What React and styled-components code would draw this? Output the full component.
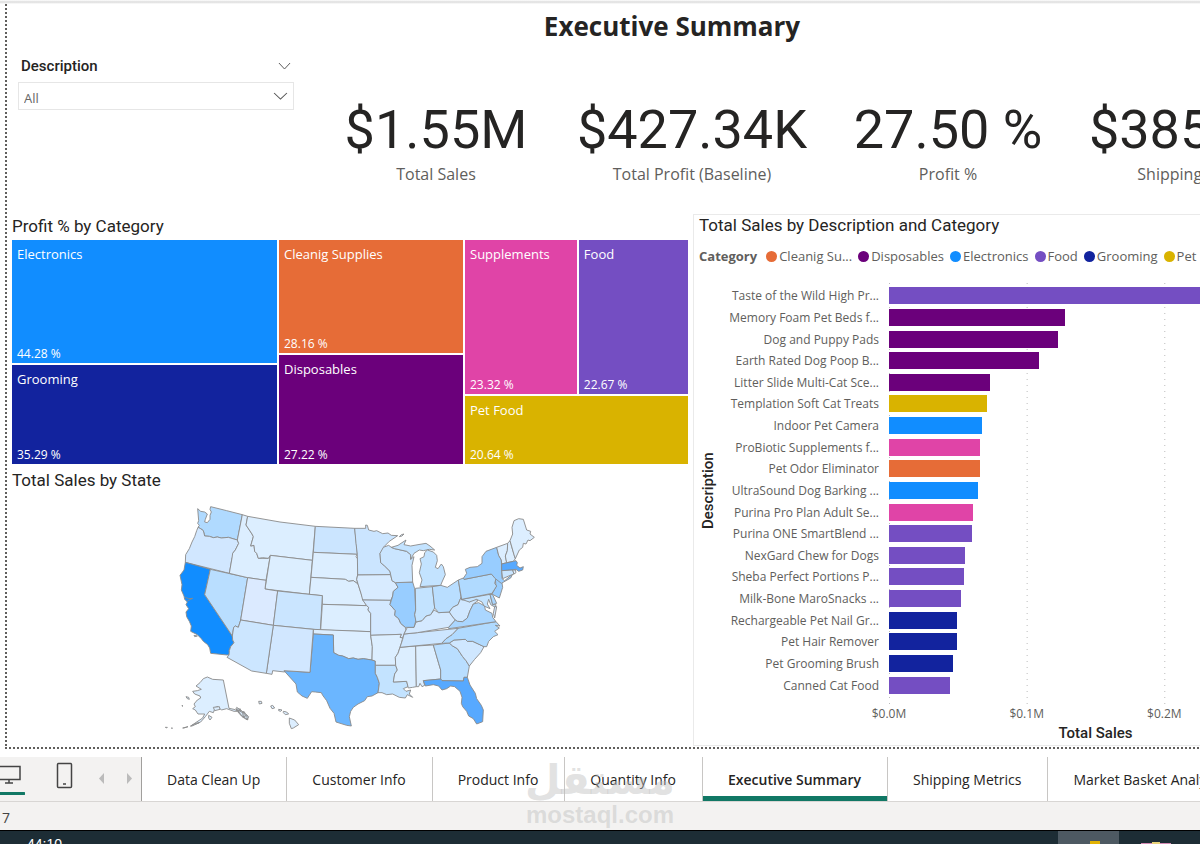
import React from 'react'
import styled, { createGlobalStyle } from 'styled-components'

const GlobalStyle = createGlobalStyle`
    * {
        box-sizing: border-box;
    }
    body {
        margin: 0;
        background: #fff;
        color: #252423;
        font-family: "Open Sans", "Noto Sans", sans-serif;
        overflow: hidden;
    }
    button, select {
        font-family: inherit;
    }
`;

const din = '"Roboto", "Liberation Sans", sans-serif';

const Page = styled.div`
    position: relative;
    overflow: hidden;
`;
const Ribbon = styled.div`
    height: 4px;
    background: linear-gradient(#fff, #dcdcdc, #fff);
`;
const Report = styled.main`
    width: 111%;
    padding: 0 0 3px 12px;
    background:
        repeating-linear-gradient(#605e5c 0 2px, transparent 2px 4px) 5px 0 / 2px 100% no-repeat,
        repeating-linear-gradient(90deg, #605e5c 0 2px, transparent 2px 4px) 5px 100% / 100% 2px no-repeat;
`;
const Title = styled.h1`
    margin: 0;
    height: 46px;
    line-height: 45px;
    font-size: 26px;
    font-weight: 700;
    text-align: center;
`;
const Summary = styled.section`
    display: flex;
    height: 164px;
`;
const Slicer = styled.div`
    width: 276px;
    margin: 0 14px 0 6px;
`;
const SlicerHeader = styled.div`
    display: flex;
    align-items: center;
    justify-content: space-between;
    height: 32px;
    padding: 0 3px;
    font-family: ${din};
    font-size: 15px;
    font-weight: 500;
`;
const IconButton = styled.button`
    display: flex;
    padding: 0;
    border: none;
    background: none;
    cursor: pointer;
`;
const SelectBox = styled.div`
    position: relative;
    display: flex;
    align-items: center;
    height: 28px;
    border: 1px solid #e6e6e6;

    svg {
        position: absolute;
        right: 5px;
        pointer-events: none;
    }
`;
const Select = styled.select`
    width: 100%;
    height: 26px;
    padding: 4px 5px 0;
    border: none;
    background: none;
    color: #666;
    font-size: 13px;
    appearance: none;
`;
const Cards = styled.div`
    display: flex;
    flex: 1;
`;
const Card = styled.div`
    display: flex;
    flex: 1 1 0;
    flex-direction: column;
    align-items: center;
    padding-top: 48px;
    white-space: nowrap;
`;
const CardValue = styled.div`
    font-family: ${din};
    font-size: 54px;
    line-height: 64px;
`;
const CardLabel = styled.div`
    color: #605e5c;
    font-size: 16px;
    line-height: 24px;
`;
const Visuals = styled.div`
    display: grid;
    grid-template-columns: 676fr 639fr;
    column-gap: 5px;
`;
const VisualTitle = styled.h2`
    margin: 0;
    height: ${props => props.$height}px;
    line-height: ${props => props.$height - 2}px;
    font-family: ${din};
    font-size: 17px;
    font-weight: 400;
`;
const Treemap = styled.div`
    display: flex;
    gap: 2px;
    height: 224px;
`;
const TreeColumn = styled.div`
    display: flex;
    flex: ${props => props.$size} 1 0;
    flex-direction: column;
    gap: 2px;
`;
const TreeRow = styled.div`
    display: flex;
    flex: ${props => props.$size} 1 0;
    gap: 2px;
`;
const Tile = styled.div`
    display: flex;
    flex: ${props => props.$size} 1 0;
    flex-direction: column;
    justify-content: space-between;
    padding: 5px 5px 0;
    background: ${props => props.$color};
    color: #fff;
    font-size: 13px;
    line-height: 18px;
`;
const TileValue = styled.span`
    font-size: 12px;
`;
const MapDrawing = styled.svg`
    display: block;
    width: 100%;
    height: 242px;
    stroke: #8a8a8a;
    stroke-width: 2.7;
    stroke-linejoin: round;
`;
const BarVisual = styled.section`
    height: 532px;
    padding-left: 5px;
    border: 1px solid #eaeaea;
`;
const Legend = styled.ul`
    display: flex;
    align-items: center;
    gap: 6px;
    height: 36px;
    margin: 0;
    padding: 0;
    list-style: none;
    color: #605e5c;
    font-size: 13px;
    white-space: nowrap;
`;
const LegendTitle = styled.li`
    margin-right: 3px;
    font-weight: 700;
`;
const LegendItem = styled.li`
    display: flex;
    align-items: center;
    gap: 2px;
`;
const Dot = styled.span`
    width: 11px;
    height: 11px;
    border-radius: 50%;
    background: ${props => props.$color};
`;
const ChartBody = styled.div`
    display: grid;
    grid-template-columns: 18px 162px 1fr;
    column-gap: 5px;
    padding: 8px 29px 0 0;
`;
const AxisTitle = styled.div`
    font-family: ${din};
    font-size: 15px;
    font-weight: 500;
    line-height: 18px;
    text-align: center;
`;
const VerticalTitle = styled(AxisTitle)`
    padding-top: 6px;
    writing-mode: vertical-rl;
    transform: rotate(180deg);
`;
const Names = styled.div`
    display: flex;
    flex-direction: column;
    height: 411px;
    margin-top: 3px;
    padding-right: 5px;
    color: #605e5c;
    font-size: 12px;
    text-align: right;
    white-space: nowrap;
`;
const Name = styled.div`
    display: flex;
    flex: 1;
    align-items: center;
    justify-content: flex-end;
`;
const Plot = styled.div`
    height: 423px;
    padding: 3px 0 9px;
    display: flex;
    flex-direction: column;
    background: repeating-linear-gradient(#fff 0 1px, transparent 1px 2px, #fff 2px 6px),
        linear-gradient(90deg, #bbb 1px, transparent 1px) 0 0 / 33.33% 100%;
`;
const BarSlot = styled.div`
    display: flex;
    flex: 1;
    align-items: center;
`;
const Bar = styled.div`
    height: 17px;
    background: ${props => props.$color};
`;
const Ticks = styled.div`
    display: grid;
    grid-column: 3;
    grid-template-columns: repeat(3, 1fr);
    color: #605e5c;
    font-size: 12px;
    line-height: 18px;
`;
const Tick = styled.span`
    width: 60px;
    margin-left: -30px;
    text-align: center;
`;
const BottomTitle = styled(AxisTitle)`
    grid-column: 3;
    line-height: 20px;
`;
const TabBar = styled.nav`
    display: flex;
    height: 45px;
    margin-top: 8px;
    border-bottom: 1px solid #d8d6d4;
`;
const ViewTools = styled.div`
    display: flex;
    flex: 0 0 142px;
    align-items: center;
    border-right: 1px solid #a19f9d;
    background: #f3f2f1;
`;
const ViewButton = styled(IconButton)`
    width: ${props => props.$width}px;
    height: 44px;
    align-items: flex-start;
    justify-content: ${props => props.$end ? 'flex-end' : 'flex-start'};
`;
const Tab = styled.button`
    flex: none;
    height: 44px;
    padding: 0 26px 0 25px;
    border: none;
    border-right: 1px solid #c8c6c4;
    background: #fff;
    color: #252423;
    font-size: 14px;
    font-weight: ${props => props.$active ? 600 : 400};
    box-shadow: ${props => props.$active ? 'inset 0 -5px #117865' : 'none'};
    cursor: pointer;
`;
const StatusBar = styled.div`
    height: 28px;
    padding: 0 2px;
    background: #f3f2f1;
    color: #444;
    font-size: 14px;
    line-height: 32px;
`;
const Taskbar = styled.footer`
    display: flex;
    height: 14px;
    overflow: hidden;
    border-top: 1px solid #000;
    background: #1d2d35;
    color: #fff;
`;
const Clock = styled.span`
    flex: 0 0 1058px;
    padding: 5px 27px 0;
    font-family: "Liberation Sans", sans-serif;
    font-size: 14px;
    line-height: 16px;
`;
const TaskItem = styled.div`
    display: flex;
    flex: 0 0 61px;
    align-items: flex-end;
    justify-content: center;
    padding-left: 12px;
    background: ${props => props.$active ? '#4d5962' : 'transparent'};
`;
const Watermark = styled.div`
    position: absolute;
    bottom: 16px;
    left: 50%;
    width: 160px;
    margin-left: -80px;
    color: rgba(190, 190, 190, 0.45);
    font-family: "Liberation Sans", sans-serif;
    font-size: 24px;
    font-weight: 700;
    line-height: 26px;
    text-align: center;
    pointer-events: none;
`;
const WatermarkName = styled.div`
    font-family: "DejaVu Sans", sans-serif;
    font-size: 41px;
    line-height: 44px;
`;

const colors = {
  cleaning: '#e66c37',
  disposables: '#6b007b',
  electronics: '#118dff',
  food: '#744ec2',
  grooming: '#12239e',
  petFood: '#d9b300',
  supplements: '#e044a7',
};

const cards = [
  ['$1.55M', 'Total Sales'],
  ['$427.34K', 'Total Profit (Baseline)'],
  ['27.50 %', 'Profit %'],
  ['$385.80K', 'Shipping Revenue'],
];

const legend = [
  ['Cleanig Su...', colors.cleaning],
  ['Disposables', colors.disposables],
  ['Electronics', colors.electronics],
  ['Food', colors.food],
  ['Grooming', colors.grooming],
  ['Pet Food', colors.petFood],
];

// sales in thousands of dollars, the axis ends at 300
const products = [
  ['Taste of the Wild High Pr...', 276, colors.food],
  ['Memory Foam Pet Beds f...', 127.5, colors.disposables],
  ['Dog and Puppy Pads', 122.8, colors.disposables],
  ['Earth Rated Dog Poop B...', 109.2, colors.disposables],
  ['Litter Slide Multi-Cat Sce...', 73.4, colors.disposables],
  ['Templation Soft Cat Treats', 71.4, colors.petFood],
  ['Indoor Pet Camera', 67.8, colors.electronics],
  ['ProBiotic Supplements f...', 66.2, colors.supplements],
  ['Pet Odor Eliminator', 65.8, colors.cleaning],
  ['UltraSound Dog Barking ...', 64.8, colors.electronics],
  ['Purina Pro Plan Adult Se...', 60.7, colors.supplements],
  ['Purina ONE SmartBlend ...', 60.1, colors.food],
  ['NexGard Chew for Dogs', 55.2, colors.food],
  ['Sheba Perfect Portions P...', 54.5, colors.food],
  ['Milk-Bone MaroSnacks ...', 52.3, colors.food],
  ['Rechargeable Pet Nail Gr...', 49.7, colors.grooming],
  ['Pet Hair Remover', 49.6, colors.grooming],
  ['Pet Grooming Brush', 46.4, colors.grooming],
  ['Canned Cat Food', 44.2, colors.food],
];

const states = [
  ['WA', '#b0daff', '113,56 122,64 134,66 142,72 136,88 134,96 142,98 150,88 150,76 154,66 150,58 152,50 200,62 247,74 232,150 205,142 184,144 172,141 160,143 148,139 134,138 130,122 122,116 114,112 118,106 113,100 116,92'],
  ['OR', '#d1e7ff', '114,112 122,116 130,122 134,138 148,139 160,143 172,141 184,144 205,142 232,150 236,160 226,180 218,190 220,198 216,204 208,250 76,217 77,194 88,176 96,156 104,140 110,122'],
  ['CA', '#118dff', '76,217 151,238 134,314 217,438 218,450 222,458 212,470 207,482 210,492 202,495 152,490 149,474 143,464 130,454 124,446 112,434 92,424 94,408 88,394 80,380 78,366 86,356 78,344 82,336 74,328 72,318 64,300 66,284 60,256 72,240'],
  ['NV', '#b9deff', '151,238 263,263 242,390 235,412 226,408 221,412 217,438 134,314'],
  ['ID', '#dceeff', '247,74 263,79 258,105 276,132 280,140 272,168 282,166 284,184 290,190 295,205 325,205 331,196 318,271 263,263 208,250 216,204 218,190 226,180 236,160 232,150'],
  ['MT', '#dceeff', '263,79 360,96 466,109 457,211 331,196 325,205 308,203 295,205 290,190 284,184 282,166 272,168 280,140 276,132 258,105'],
  ['WY', '#dceeff', '331,196 457,211 448,313 315,297'],
  ['ND', '#cbe5ff', '466,109 584,115 588,150 592,193 460,187'],
  ['SD', '#dceeff', '460,187 592,193 588,200 594,208 593,255 590,268 594,282 580,272 566,274 556,268 453,262'],
  ['NE', '#dceeff', '453,262 556,268 566,274 580,272 594,282 603,310 610,330 620,347 487,343 487,317 448,313'],
  ['UT', '#dbeaff', '263,263 318,271 315,297 353,303 340,406 242,390'],
  ['CO', '#cae5ff', '353,303 487,317 481,420 340,406'],
  ['KS', '#dceeff', '487,343 620,347 626,352 624,360 632,370 632,425 482,420'],
  ['OK', '#dceeff', '460,418 632,425 632,436 637,470 636,510 610,506 594,508 580,504 566,506 548,498 536,496 521,488 520,435 460,432'],
  ['TX', '#6bb6ff', '460,432 520,435 521,488 536,496 548,498 566,506 580,504 594,508 610,506 636,510 646,513 646,550 652,562 658,580 654,608 636,618 622,620 614,632 594,642 580,652 572,664 568,680 574,708 560,706 528,696 522,670 510,655 500,632 488,616 484,608 466,606 455,605 442,625 426,618 412,606 408,582 372,542 450,547'],
  ['NM', '#d1e7ff', '340,406 460,418 450,547 372,542 374,546 338,542 336,553 319,550'],
  ['AZ', '#cce6ff', '242,390 340,406 319,550 275,543 201,502 207,495 208,482 212,470 222,458 218,450 217,438 221,412 226,408 235,412'],
  ['MN', '#cbe5ff', '584,115 617,115 617,105 622,106 626,120 642,124 650,122 668,131 684,129 694,136 713,137 688,154 672,170 668,180 660,190 662,218 674,228 690,244 692,254 593,255 592,193 588,160'],
  ['IA', '#d8ebff', '593,255 692,254 696,272 706,278 714,292 700,304 698,318 692,331 608,330 603,310 594,282 590,268'],
  ['MO', '#d3e8ff', '608,330 692,331 690,344 706,362 704,376 716,386 722,400 736,412 738,420 732,432 728,444 720,442 724,433 632,436 632,370 624,360 626,352 620,347'],
  ['AR', '#dceeff', '632,436 724,433 720,442 728,444 724,460 714,490 706,502 707,526 646,526 646,513 636,510 637,470'],
  ['LA', '#c3e3ff', '646,526 707,526 712,540 704,552 700,576 740,574 744,590 730,596 738,604 752,600 748,612 758,622 742,614 736,624 718,622 698,612 680,614 666,608 654,608 658,580 652,562 646,550'],
  ['MS', '#dceeff', '720,472 767,468 769,590 758,592 745,594 740,574 700,576 704,552 712,540 707,526 706,502 714,490'],
  ['AL', '#dceeff', '767,468 820,465 836,520 842,540 842,567 790,572 794,586 786,590 780,580 776,590 769,590'],
  ['GA', '#b9deff', '820,465 868,459 878,468 892,476 908,500 918,512 928,528 922,562 912,562 910,573 846,572 842,567 842,540 836,520'],
  ['FL', '#57a9ff', '790,572 842,567 846,572 910,573 912,562 922,562 930,585 946,610 950,626 964,646 970,660 968,695 950,702 940,686 926,678 920,664 908,650 904,640 906,622 900,604 884,590 872,588 860,596 846,600 836,588 820,584 796,588'],
  ['SC', '#cfe7ff', '868,459 882,450 916,448 922,454 938,454 972,470 962,488 944,508 928,528 918,512 908,500 892,476 878,468'],
  ['NC', '#b0daff', '845,460 858,446 876,434 894,415 1008,395 1020,408 1006,406 1018,414 1004,424 1014,434 1000,440 986,454 980,470 972,470 938,454 922,454 916,448 882,450 868,459'],
  ['TN', '#cde6ff', '732,432 772,428 894,415 876,434 858,446 845,460 720,472 728,448'],
  ['KY', '#d4e9ff', '732,432 738,420 742,412 762,412 768,396 786,392 798,378 812,374 822,360 836,368 868,366 876,378 886,390 866,412 772,428'],
  ['IL', '#98cdff', '706,278 758,276 764,296 767,360 764,374 768,390 762,412 742,412 736,412 722,400 716,386 704,376 706,362 690,344 698,318 700,304 714,292'],
  ['IN', '#c3e3ff', '766,295 817,290 824,354 812,374 798,378 786,392 768,396 764,374 767,360'],
  ['OH', '#b9deff', '817,290 842,286 862,292 895,270 903,322 894,344 878,352 868,366 836,368 824,354'],
  ['WV', '#cfe7ff', '903,322 905,330 924,328 928,336 944,326 954,332 940,342 930,362 922,384 908,395 892,394 886,390 876,378 868,366 878,352 894,344'],
  ['VA', '#aad6ff', '866,412 886,390 892,394 908,395 922,384 930,362 940,342 956,338 974,348 976,360 996,370 998,382 1008,395 894,412 866,416'],
  ['MD', '#c3e3ff', '905,328 990,313 998,344 1008,344 1006,352 992,344 986,328 982,342 990,356 972,348 966,336 950,328 928,336'],
  ['DE', '#aad6ff', '990,313 998,314 1010,340 998,344'],
  ['DV', '#d3e8ff', '1004,350 1010,350 1004,384 1000,370'],
  ['NJ', '#98cdff', '1006,266 1025,272 1028,292 1018,324 996,312 1008,290'],
  ['PA', '#b0daff', '895,270 910,264 912,268 994,252 1008,266 1004,280 1010,288 996,310 905,328'],
  ['NY', '#98cdff', '910,265 920,250 916,238 930,232 952,230 966,220 966,200 978,184 1010,172 1016,196 1024,210 1026,266 1034,272 1058,252 1052,264 1024,280 1006,266 994,252 912,268'],
  ['VT', '#dceeff', '1010,172 1043,160 1042,182 1036,198 1040,218 1025,222 1024,210 1016,196'],
  ['NH', '#dceeff', '1043,160 1050,152 1062,194 1066,206 1060,214 1040,218 1036,198 1042,182'],
  ['ME', '#dceeff', '1050,152 1058,132 1056,112 1062,92 1076,86 1090,88 1100,120 1112,124 1110,132 1123,142 1110,152 1104,150 1098,162 1090,160 1088,172 1078,180 1066,206 1062,194'],
  ['MA', '#57a9ff', '1025,222 1060,214 1068,212 1072,218 1070,226 1080,234 1090,230 1088,240 1076,244 1068,238 1058,240 1025,242'],
  ['CT', '#c9e5ff', '1025,242 1058,240 1062,252 1046,258 1028,266'],
  ['RI', '#dceeff', '1058,240 1066,240 1068,248 1062,252'],
  ['WI', '#cae5ff', '670,172 686,166 694,172 704,176 740,184 752,194 752,208 762,200 756,226 758,276 706,278 696,272 692,254 690,244 674,228 662,218 660,190'],
  ['MU', '#c3e3ff', '694,172 714,166 738,150 732,164 752,168 774,164 798,160 810,168 824,180 808,178 790,182 778,180 762,190 752,208 752,194 740,184 704,176'],
  ['MI', '#c3e3ff', '802,180 820,186 830,196 832,212 826,232 834,236 844,222 850,230 856,254 846,276 842,286 780,290 786,270 778,248 784,222 780,206 792,200 794,188'],
  ['AK', '#dceeff', '120,578 130,566 142,561 158,568 190,570 207,655 222,658 236,664 222,664 200,656 184,660 174,650 166,652 160,668 148,664 136,680 122,696 92,708 128,684 134,672 114,672 106,660 98,656 106,650 102,642 112,630 122,624 120,618 104,612 98,604 112,602 124,598 108,588'],
];

const islands = [
  '296,634 304,634 306,640 298,642',
  '332,648 338,646 344,654 336,656',
  '356,658 366,660 362,664 356,662',
  '370,664 380,666 386,672 376,674 370,668',
  '388,684 404,690 416,704 400,714 394,716 388,700',
  '78,620 86,622 88,628 82,626',
  '102,436 112,438 104,440',
  '146,676 156,682 150,690 146,684',
  '160,652 178,650 180,658 164,662',
  '230,652 244,662 266,680 262,690 246,680 232,664',
  '236,666 254,676 264,688 242,674',
  '236,656 242,672 252,664 258,686 262,676',
  '228,656 236,668 240,656 246,676 254,668 256,684',
  '232,660 248,668 250,682 260,676 262,688 246,678',
  '68,714 84,710 72,714',
  '92,708 108,700 118,698 96,708',
  '16,712 22,712 20,714',
  '34,714 38,714 36,716',
  '66,646 69,648 67,649',
  '718,140 726,138 732,132 724,134',
];

const tabs = ['Data Clean Up', 'Customer Info', 'Product Info', 'Quantity Info', 'Executive Summary', 'Shipping Metrics', 'Market Basket Analysis'];

function Chevron({ size }) {
  return (
    <svg width={size} height="8" viewBox="0 0 14 8" fill="none" stroke="#555" preserveAspectRatio="none">
      <path d="M1 1l6 6 6-6" />
    </svg>
  )
}

function CategoryTreemap() {
  const tile = (size, name, value, color) => (
    <Tile $size={size} $color={color}>
      <span>{name}</span>
      <TileValue>{value} %</TileValue>
    </Tile>
  )
  return (
    <Treemap>
      <TreeColumn $size={265}>
        {tile(124, 'Electronics', '44.28', colors.electronics)}
        {tile(98, 'Grooming', '35.29', colors.grooming)}
      </TreeColumn>
      <TreeColumn $size={184}>
        {tile(113, 'Cleanig Supplies', '28.16', colors.cleaning)}
        {tile(109, 'Disposables', '27.22', colors.disposables)}
      </TreeColumn>
      <TreeColumn $size={223}>
        <TreeRow $size={154}>
          {tile(112, 'Supplements', '23.32', colors.supplements)}
          {tile(109, 'Food', '22.67', colors.food)}
        </TreeRow>
        <TreeRow $size={68}>
          {tile(1, 'Pet Food', '20.64', colors.petFood)}
        </TreeRow>
      </TreeColumn>
    </Treemap>
  )
}

function SalesMap() {
  return (
    <MapDrawing viewBox="-30 24 1200 726" role="img" aria-label="Total Sales by State">
      {states.map(([id, fill, points]) => <polygon key={id} fill={fill} points={points} />)}
      {islands.map(points => <polygon key={points} fill="#dceeff" points={points} />)}
      <path d="M76 322l10 4 12-1-8 4-8 4" fill="none" />
    </MapDrawing>
  )
}

function SalesBars() {
  return (
    <BarVisual>
      <VisualTitle $height={23}>Total Sales by Description and Category</VisualTitle>
      <Legend>
        <LegendTitle>Category</LegendTitle>
        {legend.map(([name, color]) => (
          <LegendItem key={name}><Dot $color={color} />{name}</LegendItem>
        ))}
      </Legend>
      <ChartBody>
        <VerticalTitle>Description</VerticalTitle>
        <Names>
          {products.map(([name]) => <Name key={name}>{name}</Name>)}
        </Names>
        <Plot>
          {products.map(([name, sales, color]) => (
            <BarSlot key={name}>
              <Bar $color={color} style={{ width: `${sales / 3}%` }} />
            </BarSlot>
          ))}
        </Plot>
        <Ticks>
          <Tick>$0.0M</Tick>
          <Tick>$0.1M</Tick>
          <Tick>$0.2M</Tick>
        </Ticks>
        <BottomTitle>Total Sales</BottomTitle>
      </ChartBody>
    </BarVisual>
  )
}

function App() {
  return (
    <Page>
      <GlobalStyle />
      <Ribbon />
      <Report>
        <Title>Executive Summary</Title>
        <Summary>
          <Slicer>
            <SlicerHeader>
              <label htmlFor="description">Description</label>
              <IconButton aria-label="Slicer type"><Chevron size={13} /></IconButton>
            </SlicerHeader>
            <SelectBox>
              <Select id="description"><option>All</option></Select>
              <Chevron size={15} />
            </SelectBox>
          </Slicer>
          <Cards>
            {cards.map(([value, label]) => (
              <Card key={label}>
                <CardValue>{value}</CardValue>
                <CardLabel>{label}</CardLabel>
              </Card>
            ))}
          </Cards>
        </Summary>
        <Visuals>
          <section>
            <VisualTitle $height={26}>Profit % by Category</VisualTitle>
            <CategoryTreemap />
            <VisualTitle $height={34}>Total Sales by State</VisualTitle>
            <SalesMap />
          </section>
          <SalesBars />
        </Visuals>
      </Report>
      <TabBar>
        <ViewTools>
          <ViewButton $width={56} aria-label="Desktop layout">
            <svg width="25" height="44" viewBox="0 0 25 44" fill="none" stroke="#444" strokeWidth="1.5">
              <path d="M-1 9.5h21v13H-1M9 23v3M5 26h8" />
              <path d="M-1 36.5h25" stroke="#117865" strokeWidth="3" strokeLinecap="round" />
            </svg>
          </ViewButton>
          <ViewButton $width={42} aria-label="Mobile layout">
            <svg width="18" height="44" viewBox="0 0 18 44" fill="none" stroke="#444" strokeWidth="1.5">
              <rect x="1.5" y="6.5" width="14" height="24" rx="1" />
              <path d="M7 27h3" />
            </svg>
          </ViewButton>
          <ViewButton $width={7} aria-label="Previous pages">
            <svg width="7" height="44" fill="#bbb"><path d="M6 16v11L1 21.5z" /></svg>
          </ViewButton>
          <ViewButton $width={28} $end aria-label="Next pages">
            <svg width="6" height="44" fill="#bbb"><path d="M0 16v11l5-5.5z" /></svg>
          </ViewButton>
        </ViewTools>
        {tabs.map(name => (
          <Tab key={name} $active={name === 'Executive Summary'}>{name}</Tab>
        ))}
      </TabBar>
      <StatusBar>7</StatusBar>
      <Taskbar>
        <Clock>44:10</Clock>
        <TaskItem $active>
          <svg width="10" height="3"><path d="M0 0h10v3H0z" fill="#e2b203" /></svg>
        </TaskItem>
        <TaskItem>
          <svg width="30" height="2"><path d="M0 1h30v1H0z" fill="#d58bb5" /><path d="M11 0h8v2h-8z" fill="#e8d27a" /></svg>
        </TaskItem>
      </Taskbar>
      <Watermark>
        <WatermarkName lang="ar">مستقل</WatermarkName>
        mostaql.com
      </Watermark>
    </Page>
  )
}

export default App
